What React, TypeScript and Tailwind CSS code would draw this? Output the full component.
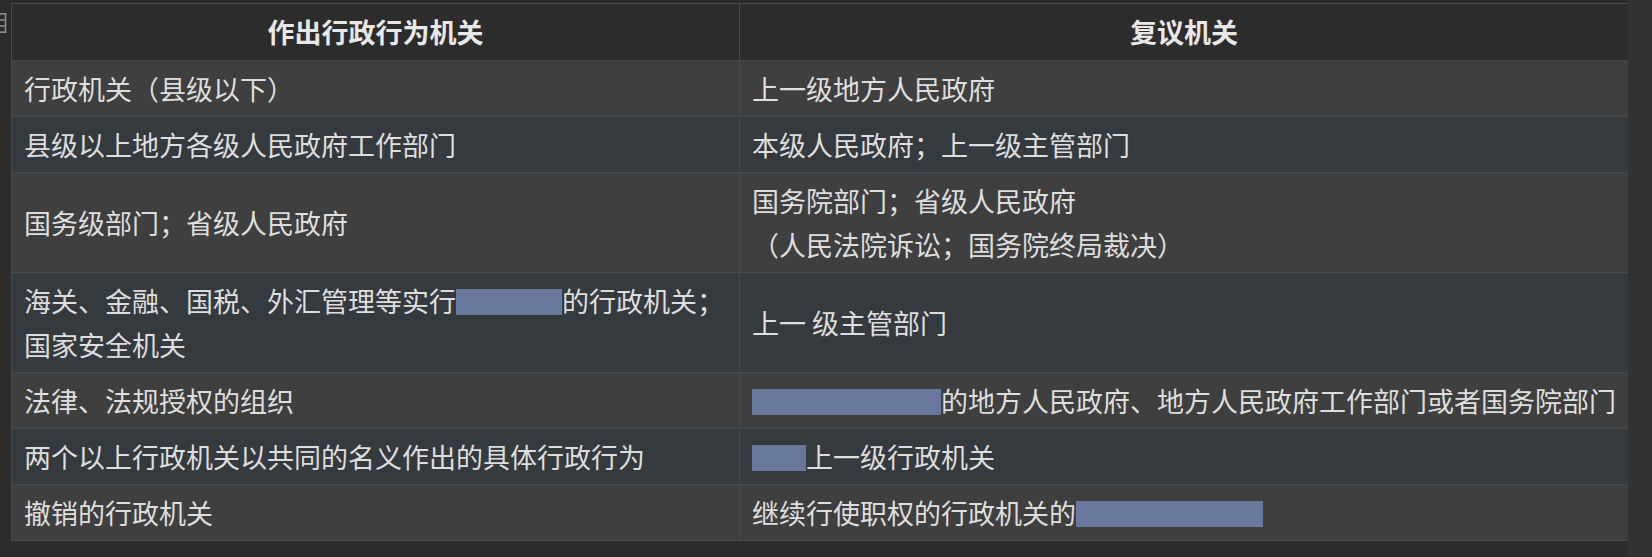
import React from "react";

const Box = ({ w }: { w: string }) => (
  <span className={`inline-block h-[26px] align-[-3px] bg-[#68779c] ${w}`} />
);

type Row = { a: React.ReactNode; b: React.ReactNode };

const rows: Row[] = [
  { a: "行政机关（县级以下）", b: "上一级地方人民政府" },
  { a: "县级以上地方各级人民政府工作部门", b: "本级人民政府；上一级主管部门" },
  {
    a: "国务级部门；省级人民政府",
    b: (
      <>
        国务院部门；省级人民政府
        <br />
        （人民法院诉讼；国务院终局裁决）
      </>
    ),
  },
  {
    a: (
      <>
        海关、金融、国税、外汇管理等实行
        <Box w="w-[106px]" />
        的行政机关；
        <br />
        国家安全机关
      </>
    ),
    b: "上一 级主管部门",
  },
  {
    a: "法律、法规授权的组织",
    b: (
      <>
        <Box w="w-[189px]" />
        的地方人民政府、地方人民政府工作部门或者国务院部门
      </>
    ),
  },
  {
    a: "两个以上行政机关以共同的名义作出的具体行政行为",
    b: (
      <>
        <Box w="w-[54px]" />
        上一级行政机关
      </>
    ),
  },
  {
    a: "撤销的行政机关",
    b: (
      <>
        继续行使职权的行政机关的
        <Box w="w-[187px]" />
      </>
    ),
  },
];

export default function App() {
  return (
    <div className="flex w-[1652px] h-[557px] overflow-hidden bg-[#2b2b2b] font-['Noto_Sans_CJK_SC','Microsoft_YaHei',sans-serif] text-[#dedede]">
      <div className="w-[11px] shrink-0 pt-[13px]">
        <svg width="7" height="20" viewBox="0 0 7 20" className="block">
          <g stroke="#8c8c8c" strokeWidth="1.6" fill="none">
            <line x1="5.5" y1="0" x2="5.5" y2="20" />
            <line x1="0" y1="0.8" x2="6" y2="0.8" />
            <line x1="0" y1="7" x2="6" y2="7" />
            <line x1="0" y1="13" x2="6" y2="13" />
            <line x1="0" y1="19.2" x2="6" y2="19.2" />
          </g>
        </svg>
      </div>
      <div className="w-[1617px] shrink-0 pt-[3px]">
        <table className="w-[1617px] table-fixed border-collapse text-[27px] leading-[44px]">
          <colgroup>
            <col className="w-[728px]" />
            <col className="w-[889px]" />
          </colgroup>
          <thead>
            <tr className="bg-[#2c2c2c]">
              <th className="border border-[#4a4a4a] py-[6px] px-[12px] text-center font-bold text-[#e8e8e8]">
                作出行政行为机关
              </th>
              <th className="border border-[#4a4a4a] py-[6px] px-[12px] text-center font-bold text-[#e8e8e8]">
                复议机关
              </th>
            </tr>
          </thead>
          <tbody>
            {rows.map((r, i) => (
              <tr key={i} className={i % 2 === 0 ? "bg-[#3f3f3f]" : "bg-[#353a3f]"}>
                <td className="border border-[#484b4e] py-[5.5px] px-[12px] align-middle whitespace-nowrap">
                  {r.a}
                </td>
                <td className="border border-[#484b4e] py-[5.5px] px-[12px] align-middle whitespace-nowrap">
                  {r.b}
                </td>
              </tr>
            ))}
          </tbody>
        </table>
      </div>
      <div className="flex-1 bg-[#323232]" />
    </div>
  );
}
